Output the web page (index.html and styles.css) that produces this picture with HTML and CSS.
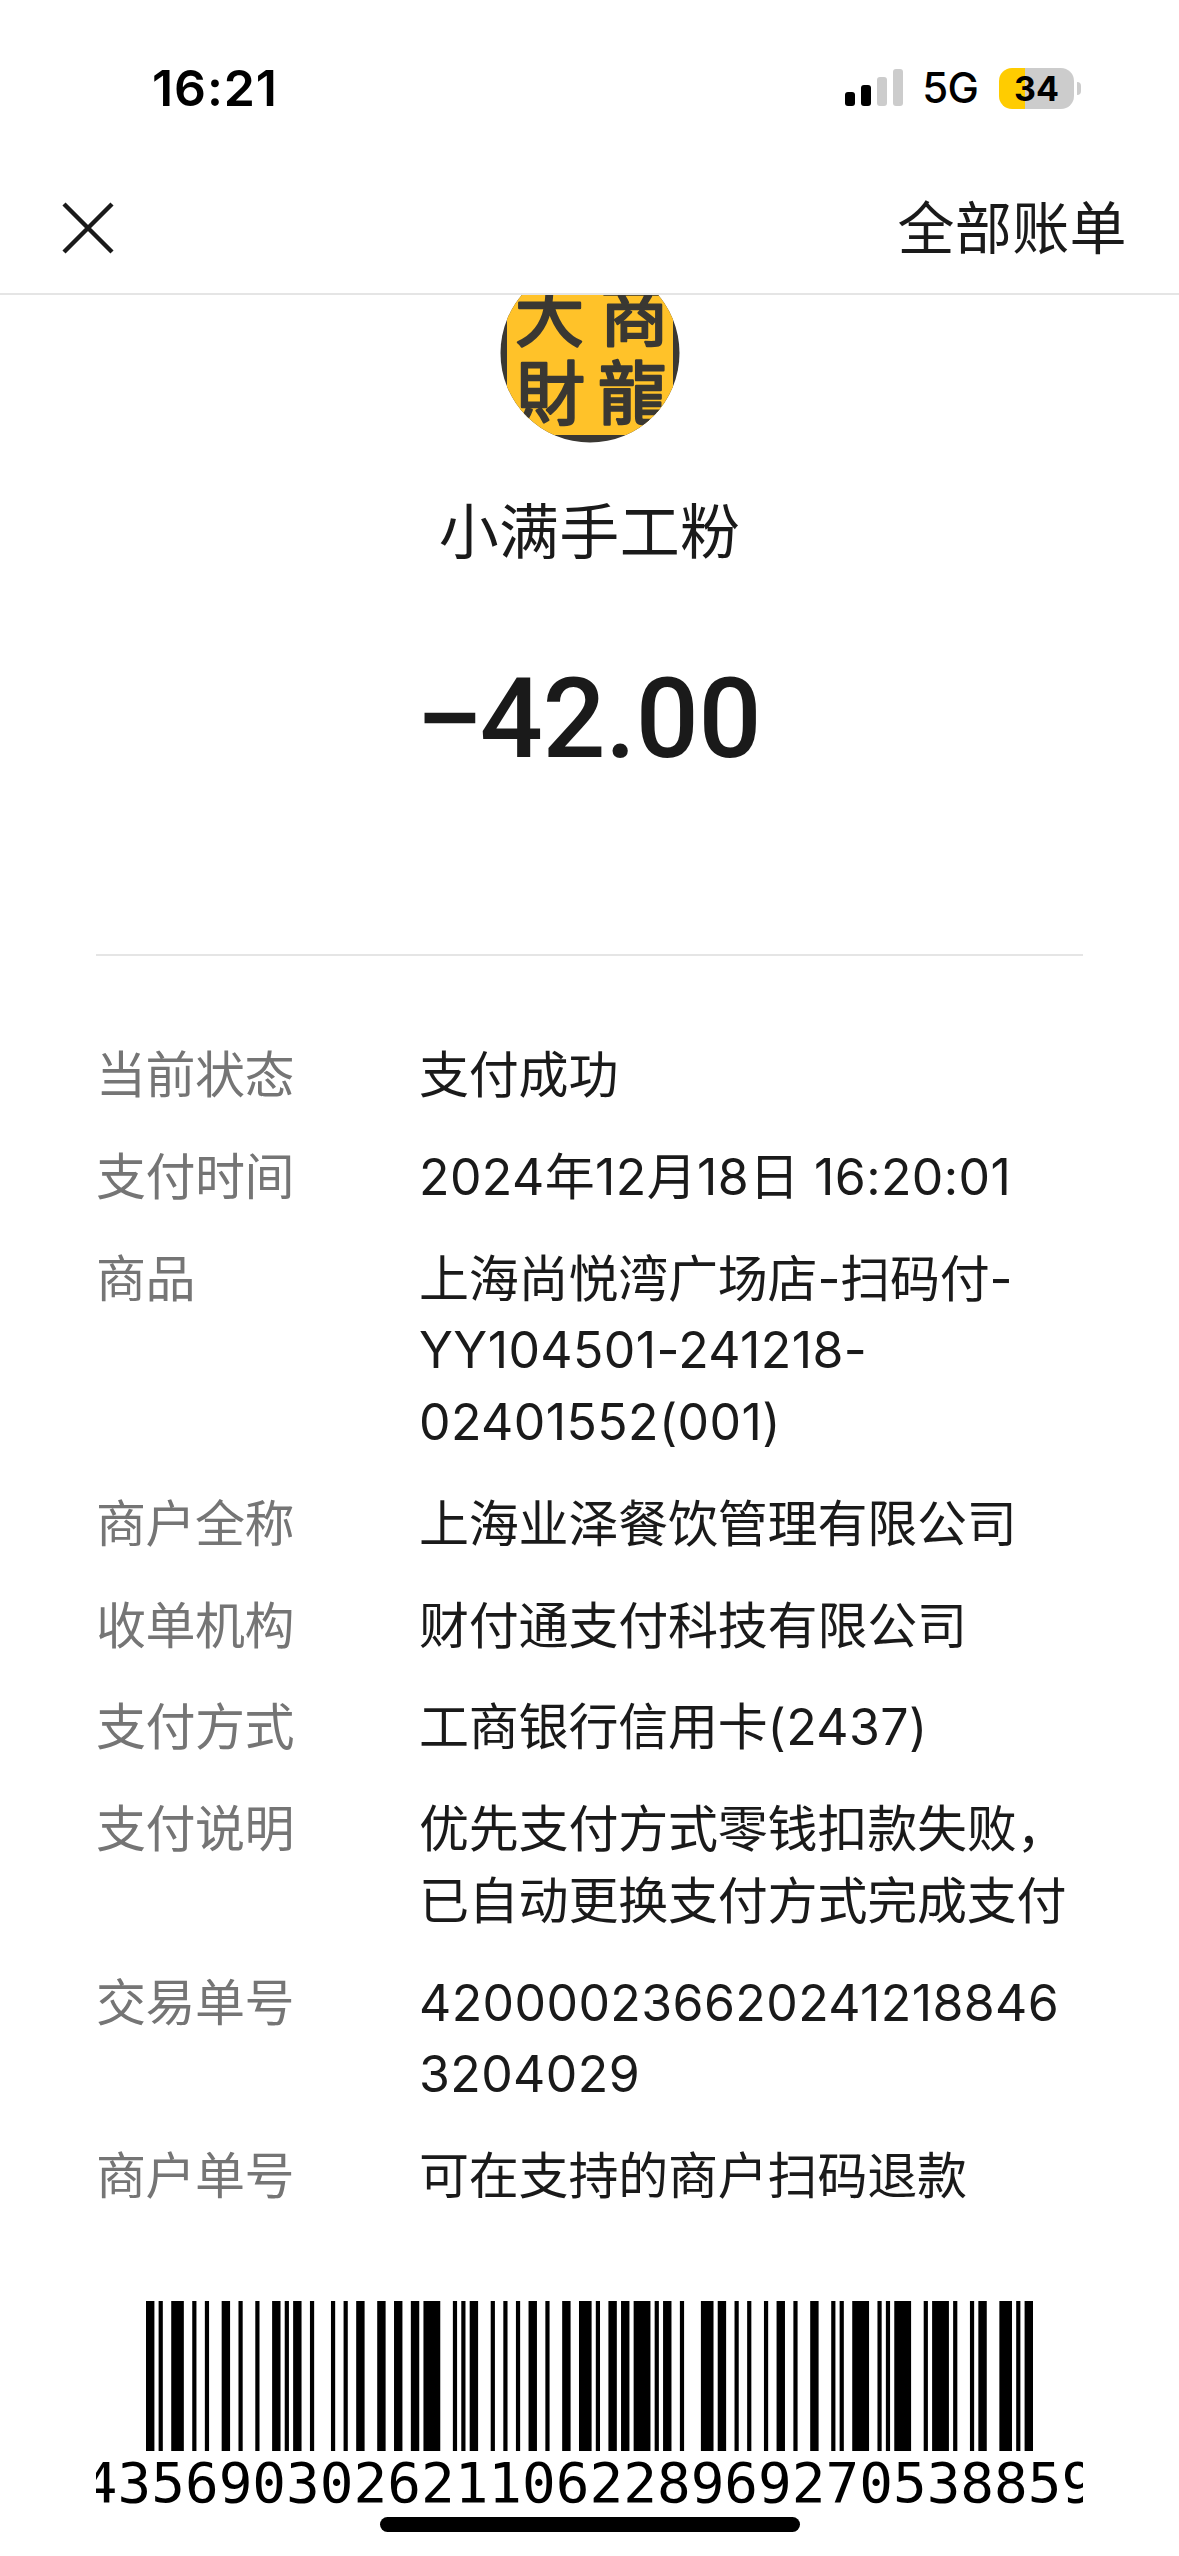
FILE: index.html
```html
<!DOCTYPE html>
<html lang="zh-CN">
<head>
    <meta charset="UTF-8">
    <meta name="viewport" content="width=device-width, initial-scale=1.0">
    <title>账单详情</title>
    <link rel="stylesheet" href="styles.css">
</head>
<body>
    <div class="screen">
        <div class="status-bar">
            <span class="time">16:21</span>
            <div class="status-icons">
                <svg class="signal" viewBox="0 0 58 38">
                    <rect x="0" y="23" width="10" height="14" rx="3"/>
                    <rect x="16" y="16" width="10" height="21" rx="3"/>
                    <rect class="off" x="32" y="8" width="10" height="29" rx="3"/>
                    <rect class="off" x="48" y="0" width="10" height="37" rx="3"/>
                </svg>
                <span class="network">5G</span>
                <div class="battery">34</div>
                <div class="battery-cap"></div>
            </div>
        </div>

        <header class="nav">
            <svg class="close" viewBox="0 0 52 52">
                <path d="M2 2 50 50M50 2 2 50"/>
            </svg>
            <span class="all-bills">全部账单</span>
        </header>

        <main class="content">
            <svg class="avatar" viewBox="0 0 180 180">
                <clipPath id="round"><circle cx="90" cy="90" r="89.5"/></clipPath>
                <g clip-path="url(#round)">
                    <rect class="frame" width="180" height="180"/>
                    <rect class="seal" x="7" y="-5" width="166" height="177"/>
                    <text x="15" y="78">大</text>
                    <text x="100" y="78">商</text>
                    <text x="16" y="156">財</text>
                    <text x="98" y="156">龍</text>
                </g>
            </svg>
            <div class="merchant">小满手工粉</div>
            <div class="amount"><span class="minus">−</span>42.00</div>

            <dl class="details">
                <div class="row"><dt>当前状态</dt><dd>支付成功</dd></div>
                <div class="row"><dt>支付时间</dt><dd class="num">2024年12月18日 16:20:01</dd></div>
                <div class="row"><dt>商品</dt><dd>上海尚悦湾广场店-扫码付-<br><span class="num">YY104501-241218-<br>02401552(001)</span></dd></div>
                <div class="row"><dt>商户全称</dt><dd>上海业泽餐饮管理有限公司</dd></div>
                <div class="row"><dt>收单机构</dt><dd>财付通支付科技有限公司</dd></div>
                <div class="row"><dt>支付方式</dt><dd>工商银行信用卡<span class="num">(2437)</span></dd></div>
                <div class="row"><dt>支付说明</dt><dd>优先支付方式零钱扣款失败，<br>已自动更换支付方式完成支付</dd></div>
                <div class="row"><dt>交易单号</dt><dd class="num">420000236620241218846<br>3204029</dd></div>
                <div class="row"><dt>商户单号</dt><dd>可在支持的商户扫码退款</dd></div>
            </dl>

            <div class="barcode">
                <!-- Code 128 C, bar and gap widths in modules, one symbol per group -->
                <svg class="bars" viewBox="0 0 211 10" preserveAspectRatio="none">
                    <path d="M0 5H211" stroke-dasharray="2 1 1 2 3 2  1 2 1 3 2 2  1 3 1 3 2 1  1 1 2 2 1 4  1 2 1 2 2 3  2 2 2 2 2 1  4 3 1 1 1 1  2 3 1 2 1 2  1 2 2 2 1 3  2 2 3 1 1 2  2 1 2 1 4 1  1 1 2 2 1 4  3 1 2 2 1 2  1 3 1 2 2 2  1 3 2 3 1 1  1 2 4 2 1 1  1 1 4 3 1 1  4 1 1 3 1 1  2 3 3 1 1 1 2"/>
                </svg>
                <div class="code">04356903026211062289692705388596</div>
            </div>
        </main>

        <div class="home-indicator"></div>
    </div>
</body>
</html>
```
FILE: styles.css
```css
* {
    margin: 0;
    padding: 0;
    box-sizing: border-box;
}

:root {
    --text: #1a1a1a;
    --label: #757575;
    --line: #e5e5e5;
}

body {
    background-color: #fff;
    color: var(--text);
    font-family: Inter, "Noto Sans CJK SC", sans-serif;
}

.screen {
    position: relative;
    display: flex;
    flex-direction: column;
    width: 1179px;
    height: 2556px;
    overflow: hidden;
}

.status-bar {
    display: flex;
    justify-content: space-between;
    align-items: center;
    height: 162px;
    padding: 14px 98px 0 152px;
    color: #000;
}

.time {
    font-size: 50px;
    font-weight: 600;
    line-height: 60px;
    letter-spacing: 0.9px;
}

.status-icons {
    display: flex;
    align-items: center;
}

.signal {
    width: 58px;
    height: 38px;
    margin-right: 19px;
}

.signal .off {
    fill: #ccc;
}

.network {
    font-size: 42px;
    font-weight: 450;
    line-height: 50px;
    letter-spacing: -0.8px;
    margin-right: 21px;
}

.battery {
    width: 75px;
    height: 41px;
    border-radius: 13px;
    background: linear-gradient(to right, #fc0 35%, #ccc 35%);
    font-size: 34px;
    font-weight: 700;
    line-height: 41px;
    text-align: center;
}

.battery-cap {
    width: 4px;
    height: 13px;
    margin-left: 3px;
    border-radius: 0 4px 4px 0;
    background-color: #ccc;
}

.nav {
    display: flex;
    justify-content: space-between;
    align-items: center;
    height: 133px;
    padding: 0 52px 0 62px;
    border-bottom: 2px solid var(--line);
}

.close {
    width: 52px;
    height: 52px;
    fill: none;
    stroke: var(--text);
    stroke-width: 4.4;
}

.all-bills {
    padding-top: 2px;
    font-size: 57px;
    line-height: 80px;
    letter-spacing: 0.4px;
}

.content {
    flex: 1;
    display: flex;
    flex-direction: column;
    align-items: center;
    overflow: hidden;
    padding: 0 96px;
}

/* scrolled halfway under the nav */
.avatar {
    flex: none;
    width: 180px;
    height: 180px;
    margin-top: -32px;
}

.avatar .frame {
    fill: #3a3833;
}

.avatar .seal {
    fill: #ffc229;
}

.avatar text {
    font-family: "Noto Sans CJK TC", sans-serif;
    font-size: 69px;
    font-weight: 400;
    fill: #3a3833;
    stroke: #3a3833;
    stroke-width: 2.4;
    stroke-linejoin: round;
}

.merchant {
    margin-top: 47px;
    font-size: 60px;
    line-height: 84px;
    letter-spacing: 0.3px;
}

.amount {
    margin-top: 79px;
    font-family: Roboto, sans-serif;
    font-size: 111px;
    font-weight: 500;
    line-height: 132px;
    letter-spacing: -0.3px;
}

.amount .minus {
    display: inline-block;
    transform: scaleX(1.1);
}

.details {
    width: 100%;
    margin-top: 169px;
    padding-top: 84px;
    border-top: 2px solid var(--line);
    font-size: 50px;
    line-height: 71.5px;
    letter-spacing: -0.2px;
}

.row {
    display: flex;
    margin-bottom: 30.4px;
}

.row dt {
    width: 323px;
    color: var(--label);
    letter-spacing: -0.5px;
}

.row dd {
    white-space: nowrap;
}

.row .num {
    letter-spacing: 0.4px;
}

.barcode {
    display: flex;
    flex-direction: column;
    align-items: center;
    width: 100%;
    margin-top: 58px;
    overflow: hidden;
}

.bars {
    width: 887px;
    height: 150px;
    margin-right: 1px;
    fill: none;
    stroke: #000;
    stroke-width: 10;
}

.code {
    font-family: "DejaVu Sans Mono", monospace;
    font-size: 56px;
    line-height: 64px;
    color: #000;
}

.home-indicator {
    position: absolute;
    left: 380px;
    bottom: 24px;
    width: 420px;
    height: 15px;
    border-radius: 8px;
    background-color: #000;
}
```
